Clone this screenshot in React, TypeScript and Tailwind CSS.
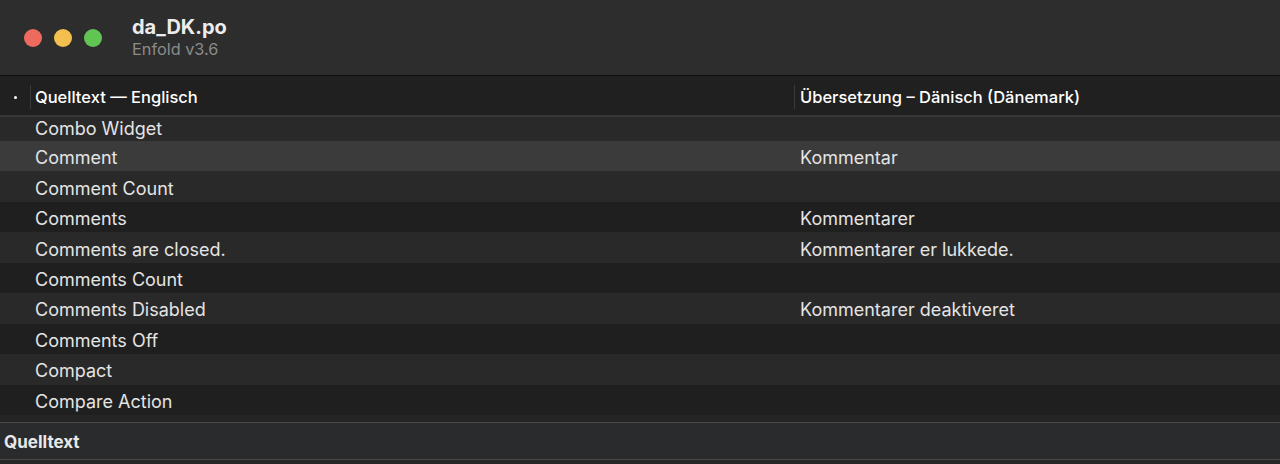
const rows: [string, string][] = [
  ["Combo Widget", ""],
  ["Comment", "Kommentar"],
  ["Comment Count", ""],
  ["Comments", "Kommentarer"],
  ["Comments are closed.", "Kommentarer er lukkede."],
  ["Comments Count", ""],
  ["Comments Disabled", "Kommentarer deaktiveret"],
  ["Comments Off", ""],
  ["Compact", ""],
  ["Compare Action", ""],
];

const rowBg = (i: number) => {
  if (i === 1) return "bg-[#3b3b3b]";
  return i % 2 === 0 ? "bg-[#292929]" : "bg-[#1f1f1f]";
};

export default function App() {
  return (
    <div
      className="h-[464px] w-[1280px] overflow-hidden bg-[#262626] text-[#e4e4e4]"
      style={{ fontFamily: "Inter, 'Noto Sans', sans-serif" }}
    >
      {/* title bar */}
      <div className="flex h-[76px] items-center border-b border-[#0e0e0e] bg-[#2d2d2d]">
        <div className="ml-[24px] flex gap-[12px]">
          <span className="h-[18px] w-[18px] rounded-full bg-[#ed6a5e]" />
          <span className="h-[18px] w-[18px] rounded-full bg-[#f4bf4f]" />
          <span className="h-[18px] w-[18px] rounded-full bg-[#61c554]" />
        </div>
        <div className="ml-[30px] -mt-[1px] flex flex-col">
          <span className="text-[20px] font-bold leading-[24px] text-[#ececec]">da_DK.po</span>
          <span className="text-[16.3px] leading-[20px] text-[#8b8b8b]">Enfold v3.6</span>
        </div>
      </div>

      {/* column header */}
      <div className="flex h-[39px] items-center bg-[#202020] pt-[3px] text-[16.5px] font-medium text-white">
        <div className="flex w-[30px] justify-center">
          <span className="h-[3px] w-[3px] rounded-full bg-white" />
        </div>
        <div className="flex h-[24px] w-[764px] items-center border-l border-[#3a3a3a] pl-[4px]">
          Quelltext — Englisch
        </div>
        <div className="flex h-[24px] flex-1 items-center border-l border-[#3a3a3a] pl-[5px]">
          Übersetzung – Dänisch (Dänemark)
        </div>
      </div>
      <div className="h-[2px] bg-[#383838]" />

      {/* rows */}
      <div className="flex h-[298px] flex-col">
        {rows.map(([src, tr], i) => (
          <div
            key={src}
            className={`flex shrink-0 items-center text-[18px] ${i === 0 ? "h-[24px] pb-[2px]" : "h-[30.44px] pt-[3px]"} ${rowBg(i)}`}
          >
            <div className="w-[35px]" />
            <div className="w-[765px] truncate">{src}</div>
            <div className="flex-1">{tr}</div>
          </div>
        ))}
      </div>

      {/* bottom panel */}
      <div className="h-[7px] bg-[#252525]" />
      <div className="flex h-[38px] items-center border-y border-[#4a4a4a] bg-[#2a2b2d] pl-[4px] pt-[3px] text-[17px] font-bold text-[#e8e8e8]">
        Quelltext
      </div>
    </div>
  );
}
